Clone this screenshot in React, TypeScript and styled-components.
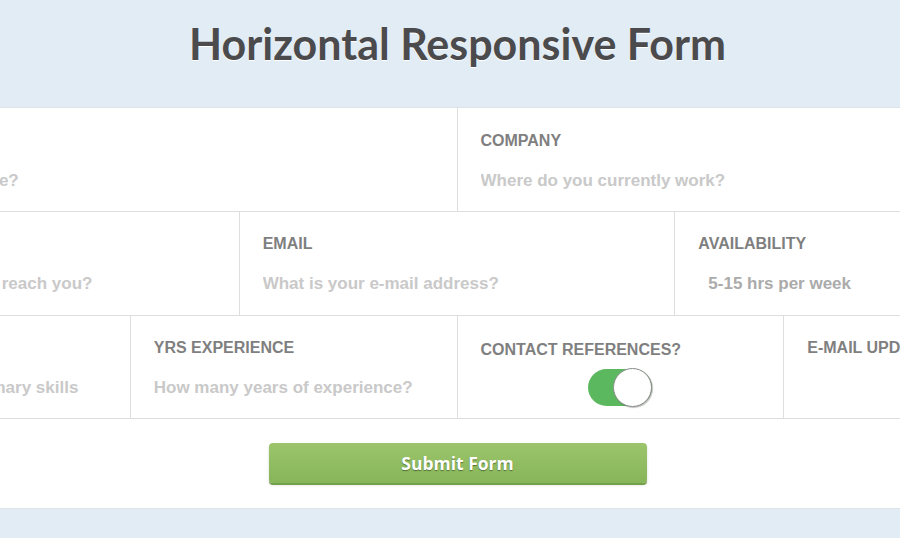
import React from "react";
import styled, { createGlobalStyle } from "styled-components";

const Global = createGlobalStyle`
  html, body { margin: 0; padding: 0; }
  body {
    background: #e2ecf4;
    overflow: hidden;
    font-family: "Liberation Sans", Arial, sans-serif;
  }
`;

const Page = styled.div`
  width: 1307px;
  margin-left: -196px;
  display: flex;
  flex-direction: column;
`;

const Header = styled.header`
  height: 107px;
  display: flex;
  align-items: center;
  justify-content: center;
`;

const Title = styled.h1`
  margin: 0;
  padding-bottom: 20px;
  font-family: "Lato", "Open Sans", sans-serif;
  font-weight: 700;
  font-size: 43px;
  letter-spacing: 0;
  color: #4b4b4d;
  text-shadow: 0 1px 0 #ffffff;
`;

const FormCard = styled.form`
  background: #ffffff;
  border-top: 1px solid #dde3e8;
  border-bottom: 1px solid #dde3e8;
  display: flex;
  flex-direction: column;
  padding-bottom: 25px;
`;

const Row = styled.div<{ $cols: number; $h: number; $pad: number }>`
  display: grid;
  grid-template-columns: repeat(${(p) => p.$cols}, 1fr);
  height: ${(p) => p.$h}px;
  box-sizing: border-box;
  padding: 0;
  border-bottom: 1px solid #dedede;
  --cell-pad: ${(p) => p.$pad}px;
`;

const Cell = styled.div`
  display: flex;
  flex-direction: column;
  align-items: flex-start;
  padding: var(--cell-pad) 23px 0 23px;
  border-right: 1px solid #dedede;
  box-sizing: border-box;
  &:last-child { border-right: none; }
`;

const Label = styled.label<{ $drop?: number }>`
  margin-top: ${(p) => p.$drop ?? 0}px;
  font-size: 16px;
  font-weight: 700;
  color: #7f7f7f;
  line-height: 20px;
  white-space: nowrap;
  text-transform: uppercase;
`;

const Field = styled.input`
  margin-top: 19px;
  border: none;
  outline: none;
  padding: 0;
  width: 100%;
  background: transparent;
  font-family: "Liberation Sans", Arial, sans-serif;
  font-size: 17px;
  font-weight: 700;
  line-height: 22px;
  color: #555;
  &::placeholder { color: #c9c9c9; opacity: 1; }
`;

const Select = styled.select`
  margin-top: 19px;
  border: none;
  outline: none;
  padding: 0 0 0 10px;
  background: transparent;
  appearance: none;
  font-family: "Liberation Sans", Arial, sans-serif;
  font-size: 17px;
  font-weight: 700;
  line-height: 22px;
  color: #ababab;
`;

const Toggle = styled.span<{ $on: boolean }>`
  position: relative;
  align-self: center;
  margin-top: 9px;
  width: 64px;
  height: 37px;
  border-radius: 19px;
  background: ${(p) => (p.$on ? "#5cb85f" : "#e5e5e5")};
  display: block;
  &::after {
    content: "";
    position: absolute;
    top: -1px;
    left: ${(p) => (p.$on ? "25px" : "-1px")};
    width: 37px;
    height: 37px;
    border-radius: 50%;
    background: #ffffff;
    border: 1px solid #8a8f8a;
    box-shadow: 1px 1px 1px rgba(0, 0, 0, 0.25);
  }
`;

const ButtonRow = styled.div`
  display: flex;
  justify-content: center;
  padding-top: 24px;
`;

const Submit = styled.button`
  width: 378px;
  height: 40px;
  border: none;
  border-radius: 4px;
  background: linear-gradient(#9cc56b, #87b55a);
  box-shadow: 0 2px 0 #73a04a, 0 2px 3px rgba(0, 0, 0, 0.15);
  font-family: "Open Sans", "Liberation Sans", sans-serif;
  font-weight: 700;
  font-size: 17.5px;
  color: #ffffff;
  text-shadow: 0 1px 1px rgba(40, 60, 20, 0.6);
  cursor: pointer;
`;

export default function App() {
  return (
    <>
      <Global />
      <Page>
        <Header>
          <Title>Horizontal Responsive Form</Title>
        </Header>
        <FormCard onSubmit={(e) => e.preventDefault()}>
          <Row $cols={2} $h={104} $pad={23}>
            <Cell>
              <Label>Name</Label>
              <Field placeholder="What is your full name?" />
            </Cell>
            <Cell>
              <Label>Company</Label>
              <Field placeholder="Where do you currently work?" />
            </Cell>
          </Row>
          <Row $cols={3} $h={104} $pad={22}>
            <Cell>
              <Label>Phone</Label>
              <Field placeholder="What number can we reach you?" />
            </Cell>
            <Cell>
              <Label>Email</Label>
              <Field placeholder="What is your e-mail address?" />
            </Cell>
            <Cell>
              <Label>Availability</Label>
              <Select defaultValue="5-15">
                <option value="5-15">5-15 hrs per week</option>
                <option value="15-30">15-30 hrs per week</option>
              </Select>
            </Cell>
          </Row>
          <Row $cols={4} $h={103} $pad={22}>
            <Cell>
              <Label>Skills</Label>
              <Field placeholder="Describe all your primary skills" />
            </Cell>
            <Cell>
              <Label>Yrs Experience</Label>
              <Field placeholder="How many years of experience?" />
            </Cell>
            <Cell>
              <Label $drop={2}>Contact References?</Label>
              <Toggle $on={true} />
            </Cell>
            <Cell>
              <Label>E-mail Updates?</Label>
              <Toggle $on={true} />
            </Cell>
          </Row>
          <ButtonRow>
            <Submit type="submit">Submit Form</Submit>
          </ButtonRow>
        </FormCard>
      </Page>
    </>
  );
}
